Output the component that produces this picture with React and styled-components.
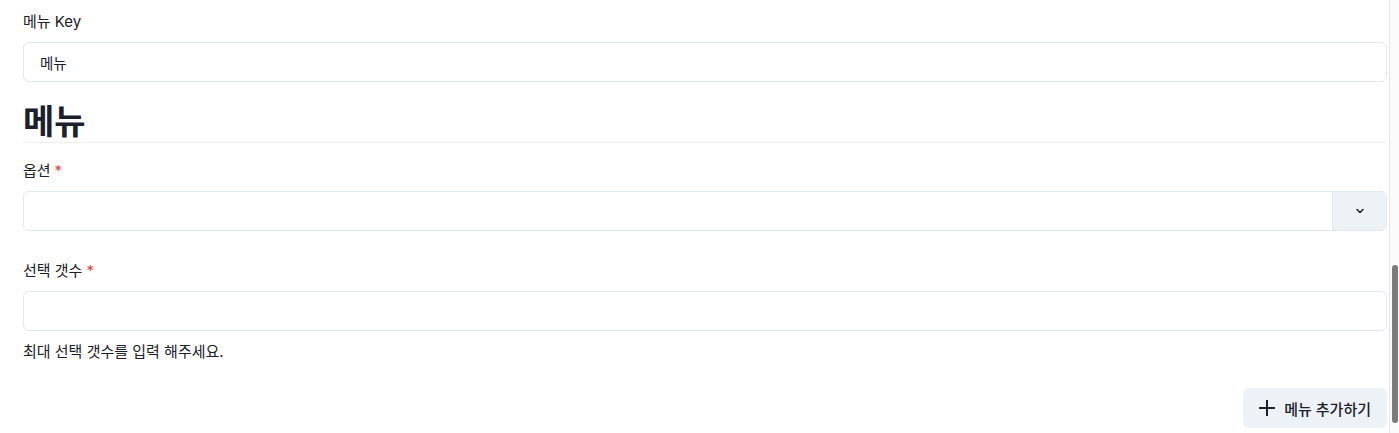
import React from 'react';
import styled, { createGlobalStyle } from 'styled-components';

const GlobalStyle = createGlobalStyle`
   html, body {
      margin: 0;
      padding: 0;
      background: #ffffff;
      overflow: hidden;
   }
   body {
      font-family: Inter, "Noto Sans CJK KR", sans-serif;
      color: #1a202c;
   }
`;

const Page = styled.div`
   padding: 10px 12px 0 23px;
   height: 433px;
   box-sizing: border-box;
`;

const Field = styled.div`
   margin-top: ${p => p.$gap || 0}px;
`;

const Label = styled.label`
   display: block;
   font-size: 15px;
   line-height: 24px;
   margin-bottom: 8px;
   color: #1a202c;

   span {
      color: #e53e3e;
      margin-left: 4px;
   }
`;

const TextInput = styled.div`
   box-sizing: border-box;
   height: 40px;
   border: 1px solid #e2e8f0;
   border-radius: 6px;
   padding: 0 16px;
   display: flex;
   align-items: center;
   font-size: 14.5px;
   color: #1a202c;
`;

const Heading = styled.h2`
   margin: 16px 0 0;
   font-size: 34px;
   line-height: 44px;
   font-weight: 700;
   font-family: "Noto Sans CJK KR", sans-serif;
   border-bottom: 1px solid #edf0f4;
`;

const SelectBox = styled.div`
   box-sizing: border-box;
   height: 40px;
   border: 1px solid #e2e8f0;
   border-radius: 6px;
   display: flex;
   overflow: hidden;
`;

const SelectValue = styled.div`
   flex: 1;
`;

const SelectAddon = styled.div`
   width: 53px;
   background: #edf2f7;
   border-left: 1px solid #e2e8f0;
   display: flex;
   align-items: center;
   justify-content: center;
`;

const HelperText = styled.p`
   margin: 11px 0 0;
   font-size: 15px;
   line-height: 20px;
   color: #1a202c;
`;

const Actions = styled.div`
   display: flex;
   justify-content: flex-end;
   margin-top: 26px;
`;

const AddButton = styled.button`
   height: 40px;
   padding: 0 16px 0 15px;
   border: none;
   border-radius: 6px;
   background: #edf2f7;
   color: #1a202c;
   font-family: Inter, "Noto Sans CJK KR", sans-serif;
   font-size: 15px;
   font-weight: 500;
   display: flex;
   align-items: center;
   gap: 8px;
`;

const ScrollTrack = styled.div`
   position: fixed;
   top: 0;
   right: 0;
   width: 9px;
   height: 100%;
   background: #fafafa;
   border-left: 1px solid #e6e6e6;
`;

const ScrollThumb = styled.div`
   position: absolute;
   left: 2px;
   top: 265px;
   width: 6px;
   height: 158px;
   border-radius: 3px;
   background: #7b7b7b;
`;

const Chevron = () => (
   <svg width="12" height="12" viewBox="0 0 24 24" fill="none" stroke="#1a202c" strokeWidth="3" strokeLinecap="round" strokeLinejoin="round">
      <path d="M6 9l6 6 6-6" />
   </svg>
);

const Plus = () => (
   <svg width="18" height="18" viewBox="0 0 18 18" fill="none" stroke="#1a202c" strokeWidth="2">
      <path d="M9 1v16M1 9h16" />
   </svg>
);

const App = () => (
   <>
      <GlobalStyle />
      <Page>
         <Field>
            <Label>메뉴 Key</Label>
            <TextInput>메뉴</TextInput>
         </Field>
         <Heading>메뉴</Heading>
         <Field $gap={16}>
            <Label>옵션<span>*</span></Label>
            <SelectBox>
               <SelectValue />
               <SelectAddon>
                  <Chevron />
               </SelectAddon>
            </SelectBox>
         </Field>
         <Field $gap={28}>
            <Label>선택 갯수<span>*</span></Label>
            <TextInput />
            <HelperText>최대 선택 갯수를 입력 해주세요.</HelperText>
         </Field>
         <Actions>
            <AddButton>
               <Plus />
               메뉴 추가하기
            </AddButton>
         </Actions>
      </Page>
      <ScrollTrack>
         <ScrollThumb />
      </ScrollTrack>
   </>
);

export default App;
